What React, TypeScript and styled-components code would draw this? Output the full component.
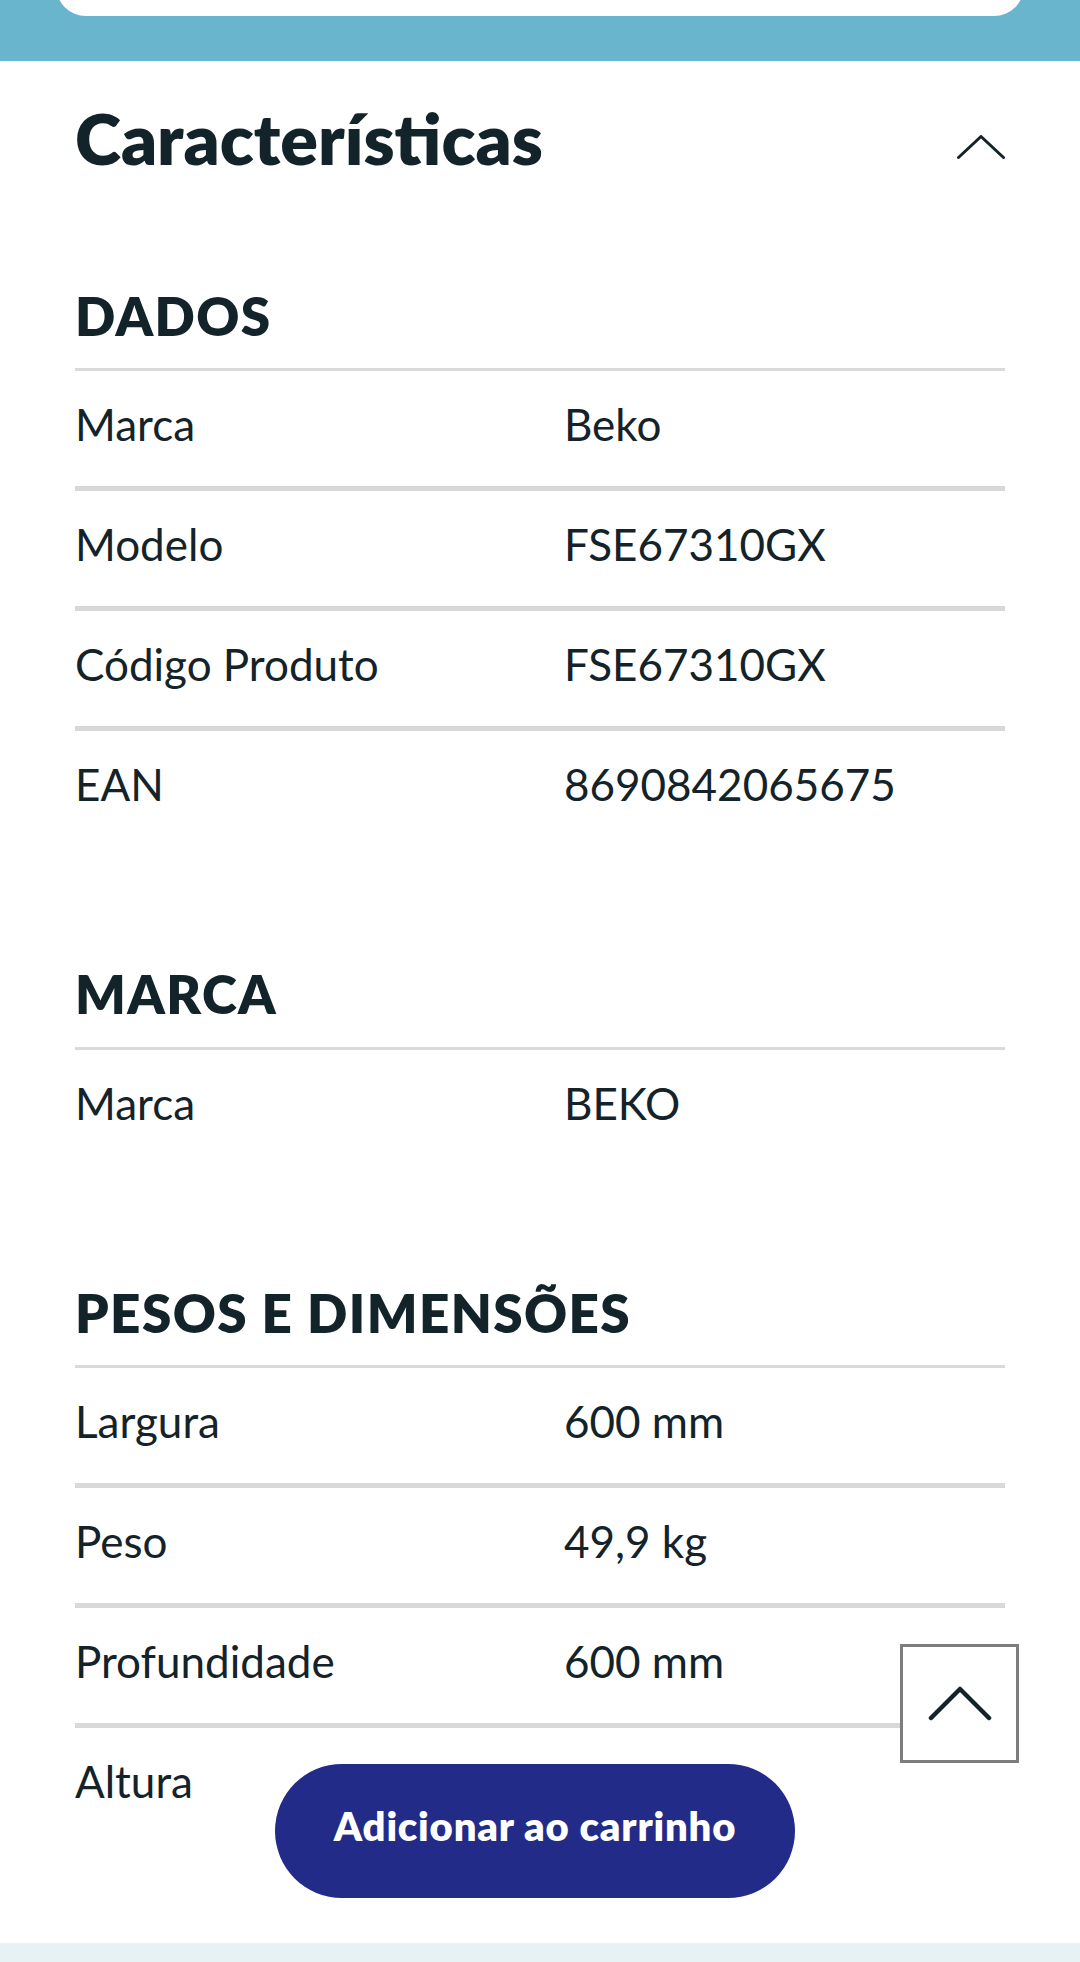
import React from "react";
import styled, { createGlobalStyle } from "styled-components";

const GlobalStyle = createGlobalStyle`
  html, body {
    margin: 0;
    padding: 0;
    background: #ffffff;
  }
  body {
    font-family: Lato, "Open Sans", sans-serif;
    color: #142329;
  }
  * { box-sizing: border-box; }
`;

const Page = styled.div`
  display: flex;
  flex-direction: column;
  min-height: 2000px;
`;

const TopBand = styled.div`
  height: 61px;
  background: #69b5ce;
  padding: 0 56px;
  overflow: hidden;
`;

const SearchCard = styled.div`
  height: 60px;
  margin-top: -44px;
  background: #ffffff;
  border-radius: 44px;
`;

const Content = styled.section`
  padding: 35px 75px 100px;
`;

const AccordionHeader = styled.div`
  display: flex;
  align-items: center;
  justify-content: space-between;
`;

const Title = styled.h2`
  margin: 0;
  font-size: 70px;
  line-height: 84px;
  font-weight: 800;
  color: #13232a;
  letter-spacing: 0px;
`;

const HeaderChevron = styled.svg`
  width: 48px;
  height: 25px;
  margin-top: 19px;
  flex: none;
`;

const Groups = styled.div`
  margin-top: 103.5px;
  display: flex;
  flex-direction: column;
  gap: 116px;
`;

const Group = styled.div`
  display: flex;
  flex-direction: column;
`;

const GroupTitle = styled.h3`
  margin: 0;
  font-size: 53px;
  line-height: 64px;
  font-weight: 800;
  letter-spacing: 1.4px;
  color: #13232a;
  padding-bottom: 20.5px;
  border-bottom: 3px solid #dadada;
`;

const Row = styled.div`
  display: grid;
  grid-template-columns: 489px 1fr;
  padding: 27px 0 35px;
  font-size: 44px;
  line-height: 53px;
  font-weight: 400;
  color: #142329;
  border-bottom: 5px solid #d8d8d8;
  &:last-child {
    border-bottom: none;
  }
`;

const Cell = styled.span`
  white-space: nowrap;
`;

const FooterBand = styled.div`
  height: 80px;
  background: #e6f2f3;
`;

const CartButton = styled.button`
  position: fixed;
  left: 275px;
  bottom: 64px;
  width: 520px;
  height: 134px;
  border: none;
  border-radius: 67px;
  background: #232b88;
  color: #ffffff;
  font-family: Lato, "Open Sans", sans-serif;
  font-size: 40px;
  font-weight: 800;
  letter-spacing: 0.8px;
  display: flex;
  align-items: center;
  justify-content: center;
  padding: 0 0 11px;
  cursor: pointer;
`;

const ScrollTopButton = styled.button`
  position: fixed;
  right: 61px;
  bottom: 199px;
  width: 119px;
  height: 119px;
  background: #ffffff;
  border: 3px solid #7d7d7d;
  display: flex;
  align-items: center;
  justify-content: center;
  padding: 0;
  cursor: pointer;
`;

const ScrollChevron = styled.svg`
  width: 64px;
  height: 36px;
`;

type Spec = { label: string; value: string };
type Section = { title: string; rows: Spec[] };

const sections: Section[] = [
  {
    title: "DADOS",
    rows: [
      { label: "Marca", value: "Beko" },
      { label: "Modelo", value: "FSE67310GX" },
      { label: "Código Produto", value: "FSE67310GX" },
      { label: "EAN", value: "8690842065675" },
    ],
  },
  {
    title: "MARCA",
    rows: [{ label: "Marca", value: "BEKO" }],
  },
  {
    title: "PESOS E DIMENSÕES",
    rows: [
      { label: "Largura", value: "600 mm" },
      { label: "Peso", value: "49,9 kg" },
      { label: "Profundidade", value: "600 mm" },
      { label: "Altura", value: "845 mm" },
    ],
  },
];

export default function App() {
  return (
    <>
      <GlobalStyle />
      <Page>
        <TopBand>
          <SearchCard />
        </TopBand>
        <Content>
          <AccordionHeader>
            <Title>Características</Title>
            <HeaderChevron viewBox="0 0 48 25" fill="none">
              <polyline
                points="1.5,22.5 24,1.5 46.5,22.5"
                stroke="#13232a"
                strokeWidth="3"
                strokeLinecap="round"
                strokeLinejoin="round"
              />
            </HeaderChevron>
          </AccordionHeader>
          <Groups>
            {sections.map((s) => (
              <Group key={s.title}>
                <GroupTitle>{s.title}</GroupTitle>
                {s.rows.map((r) => (
                  <Row key={r.label}>
                    <Cell>{r.label}</Cell>
                    <Cell>{r.value}</Cell>
                  </Row>
                ))}
              </Group>
            ))}
          </Groups>
        </Content>
        <FooterBand />
        <ScrollTopButton aria-label="Voltar ao topo">
          <ScrollChevron viewBox="0 0 64 36" fill="none">
            <polyline
              points="3,32 32,3 61,32"
              stroke="#13232a"
              strokeWidth="4.5"
              strokeLinecap="round"
              strokeLinejoin="round"
            />
          </ScrollChevron>
        </ScrollTopButton>
        <CartButton>Adicionar ao carrinho</CartButton>
      </Page>
    </>
  );
}
